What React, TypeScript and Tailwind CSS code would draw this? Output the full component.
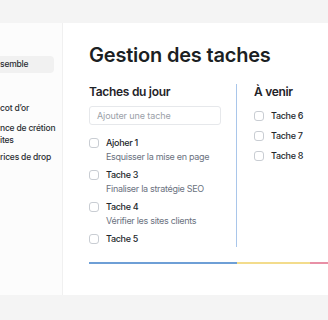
const dayTasks = [
  { title: "Ajoher 1", note: "Esquisser la mise en page" },
  { title: "Tache 3", note: "Finaliser la stratégie SEO" },
  { title: "Tache 4", note: "Vérifier les sites clients" },
  { title: "Tache 5", note: "" },
];

const nextTasks = ["Tache 6", "Tache 7", "Tache 8"];

function Box() {
  return (
    <span className="mt-[2px] block h-[10px] w-[10px] shrink-0 rounded-[3px] border border-[#c9cdd3] bg-white" />
  );
}

export default function App() {
  return (
    <div className="h-[320px] w-[328px] overflow-hidden bg-[#f4f4f4] pt-[23px] font-['Inter',sans-serif] text-[#1f2328]">
      <div className="flex h-[272px] bg-white">
        <aside className="w-[63px] shrink-0 overflow-hidden border-r border-[#f0f0f0] bg-[#fcfcfc] pt-[33px] text-[8.5px] font-medium tracking-[-0.2px] text-[#2a2e33]">
          <div className="h-[17px] w-[54px] rounded-r-[4px] bg-[#f1f1f1] leading-[17px] whitespace-nowrap">
            semble
          </div>
          <div className="mt-[29px] leading-[12px] whitespace-nowrap">cot d’or</div>
          <div className="mt-[8px] leading-[12px] whitespace-nowrap">
            nce de crétion
            <br />
            ites
          </div>
          <div className="mt-[5px] leading-[12px] whitespace-nowrap">rices de drop</div>
        </aside>

        <main className="min-w-0 flex-1 pl-[26px] pt-[18px]">
          <h1 className="text-[20px] font-semibold leading-[28px] tracking-[-0.2px] whitespace-nowrap text-[#1c1f23]">
            Gestion des taches
          </h1>

          <div className="mt-[15px] flex">
            <section className="w-[148px] shrink-0 border-r border-[#a9c6ea] pb-[1px] pr-[15px]">
              <h2 className="text-[12px] font-semibold leading-[16px] tracking-[-0.3px] whitespace-nowrap">
                Taches du jour
              </h2>
              <div className="mt-[6px] h-[19px] rounded-[3px] border border-[#e6e8eb] pl-[7px] text-[9px] leading-[17px] tracking-[-0.1px] text-[#9aa0a8] whitespace-nowrap">
                Ajouter une tache
              </div>
              <ul className="mt-[11px] flex flex-col gap-[5px]">
                {dayTasks.map((t) => (
                  <li key={t.title} className="flex gap-[7px]">
                    <Box />
                    <div className="whitespace-nowrap tracking-[-0.3px]">
                      <div className="text-[9px] font-medium leading-[14px] text-[#23272c]">{t.title}</div>
                      {t.note && (
                        <div className="text-[9px] leading-[13px] text-[#6b7280]">{t.note}</div>
                      )}
                    </div>
                  </li>
                ))}
              </ul>
            </section>

            <section className="min-w-0 flex-1 pl-[17px]">
              <h2 className="text-[12px] font-semibold leading-[16px] tracking-[-0.3px] whitespace-nowrap">
                À venir
              </h2>
              <ul className="mt-[9px] flex flex-col gap-[6px]">
                {nextTasks.map((t) => (
                  <li key={t} className="flex gap-[7px]">
                    <Box />
                    <span className="text-[9px] font-medium leading-[14px] tracking-[-0.3px] text-[#23272c] whitespace-nowrap">
                      {t}
                    </span>
                  </li>
                ))}
              </ul>
            </section>
          </div>

          <div className="mt-[15px] flex h-[2px]">
            <div className="w-[148px] bg-[#6e9fd6]" />
            <div className="w-[73px] bg-[#f3dc8c]" />
            <div className="flex-1 bg-[#e890a6]" />
          </div>
        </main>
      </div>
    </div>
  );
}
